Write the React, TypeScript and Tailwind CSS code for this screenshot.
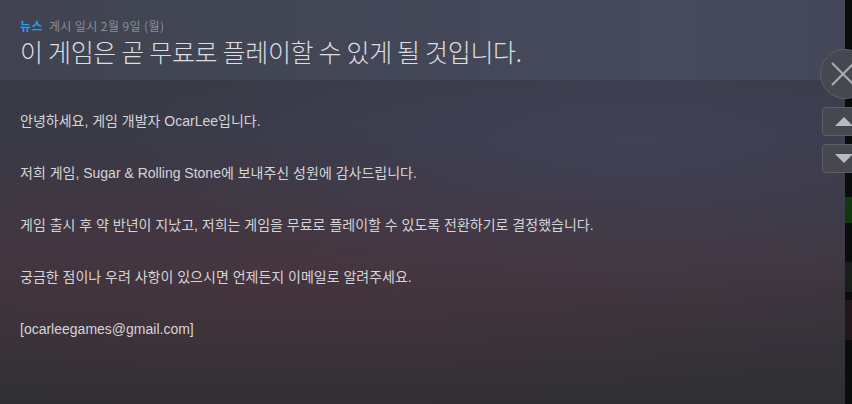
import React from "react";

const lines = [
  "안녕하세요, 게임 개발자 OcarLee입니다.",
  "저희 게임, Sugar & Rolling Stone에 보내주신 성원에 감사드립니다.",
  "게임 출시 후 약 반년이 지났고, 저희는 게임을 무료로 플레이할 수 있도록 전환하기로 결정했습니다.",
  "궁금한 점이나 우려 사항이 있으시면 언제든지 이메일로 알려주세요.",
  "[ocarleegames@gmail.com]",
];

export default function App() {
  return (
    <div className="relative w-[852px] h-[404px] overflow-hidden bg-[#0b0c0c] flex">
      <div className="w-[845px] h-[404px] flex flex-col bg-[linear-gradient(180deg,#363842_0%,#3a3a47_30%,#3f3640_65%,#2f2f34_100%)] relative">
        <div className="absolute inset-0 bg-[radial-gradient(ellipse_60%_40%_at_75%_35%,rgba(70,75,105,0.45),transparent)]" />
        <div className="absolute inset-0 bg-[radial-gradient(ellipse_70%_35%_at_35%_72%,rgba(85,50,60,0.35),transparent)]" />
        <div className="relative h-[80px] bg-[linear-gradient(90deg,#40434f_0%,#444757_50%,#474a5c_80%,#44475a_100%)] px-5 pt-[18px]" style={{ fontFamily: '"Noto Sans CJK KR", "Noto Sans", sans-serif' }}>
          <div className="flex items-center gap-[6px] text-[12px] leading-[16px] tracking-[0.4px]">
            <span className="text-[#1a9fff] font-bold">뉴스</span>
            <span className="text-[#8b8e99]">게시 일시 2월 9일 (월)</span>
          </div>
          <div className="text-[25px] leading-[32px] font-light text-[#dcdee2] mt-[1px] tracking-[-0.3px]">
            이 게임은 곧 무료로 플레이할 수 있게 될 것입니다.
          </div>
        </div>
        <div className="relative px-5 pt-[32px] flex flex-col gap-[34px] text-[14px] leading-[18px] text-[#d4d5d8]" style={{ fontFamily: '"Liberation Sans", "Noto Sans CJK KR", sans-serif' }}>
          {lines.map((l) => (
            <div key={l}>{l}</div>
          ))}
        </div>
      </div>
      <div className="flex-1 relative">
        <div className="absolute left-0 top-[197px] w-[7px] h-[26px] bg-[#123812]" />
        <div className="absolute left-0 top-[262px] w-[7px] h-[30px] bg-[#181e1a]" />
        <div className="absolute left-0 top-[300px] w-[7px] h-[40px] bg-[#211619]" />
      </div>
      <button className="absolute left-[820px] top-[49px] w-[50px] h-[50px] rounded-full bg-[#464751] border border-[#5d5e68] flex items-center justify-center">
        <svg width="30" height="30" viewBox="0 0 30 30" className="-ml-[4px]">
          <path d="M4 4 L26 26 M26 4 L4 26" stroke="#a9abb3" strokeWidth="2.2" />
        </svg>
      </button>
      <button className="absolute left-[822px] top-[107px] w-[40px] h-[29px] rounded-[4px] bg-[#47484f] border border-[#5d5e66] flex items-center pl-[12px]">
        <svg width="18" height="9" viewBox="0 0 18 9"><path d="M0 9 L9 0 L18 9 Z" fill="#b9bac2" /></svg>
      </button>
      <button className="absolute left-[822px] top-[144px] w-[40px] h-[29px] rounded-[4px] bg-[#47484f] border border-[#5d5e66] flex items-center pl-[12px]">
        <svg width="18" height="9" viewBox="0 0 18 9"><path d="M0 0 L18 0 L9 9 Z" fill="#b9bac2" /></svg>
      </button>
    </div>
  );
}
